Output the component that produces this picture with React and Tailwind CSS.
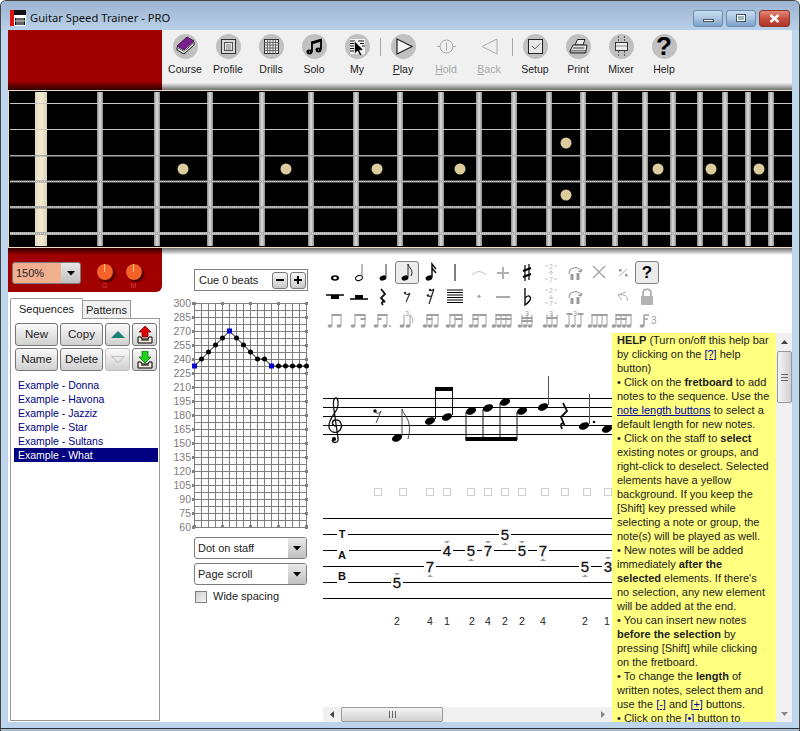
import React from "react";

const Circle = ({ children }) => (
  <div className="w-[25px] h-[25px] rounded-full bg-[#c0c0c0] flex items-center justify-center">{children}</div>
);

const I = ({ children, s = 21 }) => (
  <svg width={s} height={s} viewBox="0 0 21 21">{children}</svg>
);

const icons = {
  Course: (
    <I>
      <path d="M2 11 L12 2 L19 6 L19 9 L9 18 L2 14 Z" fill="#fff" stroke="#111" strokeWidth="1" />
      <path d="M2 10 L12 1 L19 5 L9 14 Z" fill="#7a1f8e" stroke="#4a0e5a" strokeWidth="1" />
      <path d="M3 12 L9 15.5 L18 7.5" fill="none" stroke="#555" strokeWidth="1" />
    </I>
  ),
  Profile: (
    <I>
      <rect x="3.5" y="3.5" width="14" height="14" fill="#d8d8d8" stroke="#333" />
      <rect x="6.5" y="6.5" width="8" height="8" fill="#e8e8e8" stroke="#555" />
      <path d="M8 9h5M8 11h5M8 13h5" stroke="#666" strokeWidth="0.8" />
    </I>
  ),
  Drills: (
    <I>
      <rect x="3.5" y="3.5" width="14" height="14" fill="#e4e4e4" stroke="#333" />
      <path d="M6.5 3.5v14M9 3.5v14M12 3.5v14M14.5 3.5v14M3.5 6.5h14M3.5 9h14M3.5 12h14M3.5 14.5h14" stroke="#555" strokeWidth="0.8" />
    </I>
  ),
  Solo: (
    <I>
      <path d="M7.5 5.5 L17.5 2.5 L17.5 5.5 L7.5 8.5 Z" fill="#000" />
      <path d="M8 5.5V16M17 3V13.5" stroke="#000" strokeWidth="1.8" />
      <ellipse cx="5.5" cy="16" rx="3" ry="2.4" fill="#000" />
      <ellipse cx="14.5" cy="14" rx="3" ry="2.4" fill="#000" />
      <path d="M5 16h1M14 14h1" stroke="#ccc" />
    </I>
  ),
  My: (
    <I>
      <rect x="3" y="3" width="15" height="15" fill="#f4f4f4" />
      <path d="M3 5h5M3 7.5h5M3 10h4M3 12.500h4M3 15h4M11 5h6M13 7.5h4M15 10h3" stroke="#111" strokeWidth="1.2" />
      <path d="M7.500 5 L7.500 18 L10.500 15 L13 20 L15 19 L12.500 14.500 L16.500 14 Z" fill="#000" stroke="#fff" strokeWidth="0.6" />
    </I>
  ),
  Play: (
    <I>
      <path d="M4 3 L19 10.500 L4 18 Z" fill="#f4f4f4" stroke="#222" strokeWidth="1.2" />
    </I>
  ),
  Hold: (
    <I>
      <circle cx="10.500" cy="10.500" r="6.500" fill="none" stroke="#a8a8a8" />
      <path d="M10.500 6.500v8M1 10.500h3M17 10.500h3" stroke="#a8a8a8" />
    </I>
  ),
  Back: (
    <I>
      <path d="M18 3 L3 10.500 L18 18 Z" fill="none" stroke="#a8a8a8" />
    </I>
  ),
  Setup: (
    <I>
      <rect x="3.500" y="3.500" width="14" height="14" fill="#e8e8e8" stroke="#222" />
      <path d="M7 10 L10 13 L15 7.500" fill="none" stroke="#666" strokeWidth="1" />
    </I>
  ),
  Print: (
    <I>
      <path d="M7 9 L9.500 3.500 L17 3.500 L15 9 Z" fill="#eee" stroke="#222" />
      <path d="M2 15 L5 9 L19 9 L18 15 Z" fill="#ddd" stroke="#222" />
      <path d="M2 15 L2.500 17 L17.500 17 L18 15" fill="#aaa" stroke="#222" />
      <path d="M5 12h11" stroke="#444" />
    </I>
  ),
  Mixer: (
    <I>
      <path d="M7.500 0v6M13.500 0v6M7.500 15v6M13.500 15v6" stroke="#444" strokeDasharray="2 1" strokeWidth="0.8" />
      <rect x="4.500" y="6.500" width="12" height="8" fill="#eee" stroke="#333" />
      <path d="M5 10h11" stroke="#888" />
    </I>
  ),
};

const TButton = ({ name, u, disabled }) => (
  <div className="w-[43px] flex flex-col items-center pt-[3.5px]">
    <Circle2 disabled={disabled}>
      {name === "Help" ? (
        <span className="font-['Liberation_Sans'] font-bold text-[26px] leading-[25px] text-black">?</span>
      ) : (
        icons[name]
      )}
    </Circle2>
    <div className={`text-[10.5px] leading-[14px] mt-[3px] ${disabled ? "text-[#a8a8a8]" : "text-[#222]"}`}>
      {u ? <><u>{name[0]}</u>{name.slice(1)}</> : name}
    </div>
  </div>
);

const Circle2 = ({ disabled, children }) =>
  disabled ? <div className="w-[25px] h-[25px] flex items-center justify-center">{children}</div> : <Circle>{children}</Circle>;

const Sep = () => (
  <div className="w-[3px] flex justify-center pt-[8px]">
    <div className="w-px h-[18px] bg-[#a8a8a8]" />
  </div>
);

const frets = [97, 154, 207, 259, 308, 353, 397, 438, 476, 511, 546, 580, 612, 642, 670, 697, 722, 745, 768];
const dots = [[183, 169], [286, 169], [377, 169], [460, 169], [566, 143], [566, 195], [658, 169], [711, 169], [759, 169]];

const Fretboard = () => (
  <svg width="784" height="158" viewBox="8 90 784 158" className="block">
    <defs>
      <linearGradient id="fret" x1="0" x2="1" y1="0" y2="0">
        <stop offset="0" stopColor="#8c8c8c" />
        <stop offset="0.5" stopColor="#dedede" />
        <stop offset="1" stopColor="#8c8c8c" />
      </linearGradient>
      <linearGradient id="nut" x1="0" x2="1" y1="0" y2="0">
        <stop offset="0" stopColor="#e4dcbc" />
        <stop offset="0.5" stopColor="#f2ecd6" />
        <stop offset="1" stopColor="#dcd4b4" />
      </linearGradient>
    </defs>
    <rect x="8" y="90" width="784" height="158" fill="#f0dcc0" />
    <rect x="9" y="91" width="783" height="156" fill="#000" />
    <rect x="35" y="92" width="12" height="154" fill="url(#nut)" />
    {frets.map((x) => (
      <rect key={x} x={x} y="92" width="6" height="154" fill="url(#fret)" />
    ))}
    {dots.map(([x, y]) => (
      <circle key={x + "-" + y} cx={x} cy={y} r="5.500" fill="#dccb9c" />
    ))}
    <rect x="10" y="103" width="782" height="1" fill="#c8c8c8" />
    <rect x="10" y="129" width="782" height="1" fill="#c8c8c8" />
    <rect x="10" y="155" width="782" height="1.500" fill="#a8a8a8" />
    <rect x="10" y="180.500" width="782" height="2" fill="#a0a0a0" />
    <path d="M10 181.500H792" stroke="#d0d0d0" strokeWidth="1" strokeDasharray="1 1" />
    <rect x="10" y="206" width="782" height="2.500" fill="#a0a0a0" />
    <path d="M10 207H792" stroke="#d8d8d8" strokeWidth="1" strokeDasharray="1 1" />
    <rect x="10" y="232" width="782" height="3" fill="#a8a8a8" />
    <path d="M10 233.500H792" stroke="#dcdcdc" strokeWidth="1.500" strokeDasharray="1 1" />
  </svg>
);

const Arrow = () => (
  <svg width="8" height="5" viewBox="0 0 8 5"><path d="M0 0H8L4 4.500Z" fill="#000" /></svg>
);

const Select = ({ label, w = "w-[113px]", h = "h-[22px]", seg = "w-[18px]", fill = "bg-white" }) => (
  <div className={`${w} ${h} border border-[#7c7c7c] rounded-[3px] ${fill} flex overflow-hidden`}>
    <div className="flex-1 pl-[3px] text-[11px] leading-[20px] text-[#222]">{label}</div>
    <div className={`${seg} bg-linear-to-b from-[#e8e8e8] to-[#c0c0c0] flex items-center justify-center`}>
      <Arrow />
    </div>
  </div>
);

const Knob = ({ l }) => (
  <div className="flex flex-col items-center w-[17px]">
    <div className="w-[16px] h-[16px] rounded-full bg-[#f4622a] shadow-[2px_2px_2px_#400000] flex justify-center">
      <div className="w-px h-[8px] bg-[#ffc080]" />
    </div>
    <div className="text-[7px] leading-[9px] mt-[1px] text-[#d84040]">{l}</div>
  </div>
);

const Btn = ({ children, w = "w-[43px]", disabled }) => (
  <div className={`${w} h-[23px] rounded-[3px] border ${disabled ? "border-[#c0c0c0]" : "border-[#777]"} bg-linear-to-b from-[#fafafa] to-[#d0d0d0] flex items-center justify-center text-[11.5px] text-[#222]`}>
    {children}
  </div>
);

const TrayIcon = ({ up }) => (
  <svg width="18" height="18" viewBox="0 0 18 18">
    <path d="M2 11h3l1 2h6l1-2h3v6H2Z" fill="#f0e8d8" stroke="#000" />
    <path d="M5 14h8" stroke="#000" />
    {up ? (
      <path d="M9 0 L15 6 H12 V11 H6 V6 H3 Z" fill="#e00000" stroke="#600" strokeWidth="0.7" />
    ) : (
      <path d="M6 0H12V6H15L9 12L3 6H6Z" fill="#20d020" stroke="#060" strokeWidth="0.7" />
    )}
  </svg>
);

const seqs = ["Donna", "Havona", "Jazziz", "Star", "Sultans", "What"];

const LeftPanel = () => (
  <div className="w-[154px] h-[474px] bg-white flex flex-col shrink-0">
    <div className="h-[44px] bg-[#a00000] rounded-br-[6px] relative">
      <div className="h-[7px] bg-linear-to-b from-[#300000] to-[#a00000]" />
      <div className="flex items-start pl-[4px] pt-[7px]">
        <Select label={<span>150%</span>} w="w-[69px]" h="h-[22px]" seg="w-[19px]" fill="bg-[#f0b090]" />
        <div className="flex ml-[15px] gap-[12px] pt-[2px]">
          <Knob l="G" />
          <Knob l="M" />
        </div>
      </div>
    </div>
    <div className="pl-[2px] pt-[6px] flex-1 flex flex-col">
      <div className="flex items-end h-[21px] relative z-10">
        <div className="w-[73px] h-[21px] bg-white border border-b-0 border-[#999] text-[11px] leading-[21px] text-center text-[#222] rounded-t-[2px]">Sequences</div>
        <div className="w-[48px] h-[19px] bg-[#f0f0f0] border border-l-0 border-[#999] text-[11px] leading-[19px] text-center text-[#222]">Patterns</div>
      </div>
      <div className="w-[150px] h-[403px] -mt-px border border-[#999] bg-white pl-[4px] pt-[4px]">
        <div className="flex gap-[2px]">
          <Btn>New</Btn>
          <Btn>Copy</Btn>
          <Btn w="w-[25px]">
            <svg width="14" height="7" viewBox="0 0 14 7"><path d="M0 7L7 0L14 7Z" fill="#1c8070" /></svg>
          </Btn>
          <Btn w="w-[25px]"><TrayIcon up /></Btn>
        </div>
        <div className="flex gap-[2px] mt-[2px]">
          <Btn>Name</Btn>
          <Btn>Delete</Btn>
          <Btn w="w-[25px]" disabled>
            <svg width="14" height="7" viewBox="0 0 14 7"><path d="M0.500 0.500H13.500L7 6.500Z" fill="none" stroke="#c0c0c0" /></svg>
          </Btn>
          <Btn w="w-[25px]"><TrayIcon /></Btn>
        </div>
        <div className="mt-[7px] -ml-px w-[144px]">
          {seqs.map((s) => (
            <div key={s} className={`h-[14px] text-[10.5px] leading-[14px] pl-[4px] whitespace-nowrap ${s === "What" ? "bg-[#000080] text-white" : "text-[#000080]"}`}>
              Example - {s}
            </div>
          ))}
        </div>
      </div>
    </div>
  </div>
);

const CHX = Array.from({ length: 17 }, (_, i) => 194 + i * 7);
const CHY = Array.from({ length: 33 }, (_, i) => 303 + i * 7);
const pts = [366, 359, 352, 345, 338, 331, 338, 345, 352, 359, 359, 366, 366, 366, 366, 366, 366];
const blue = [0, 5, 11];

const Chart = () => (
  <svg width="150" height="238" viewBox="170 297 150 238" className="block">
    {CHX.map((x) => <line key={x} x1={x + 0.5} x2={x + 0.5} y1="303" y2="527.500" stroke="#808080" />)}
    {CHY.map((y) => <line key={y} y1={y + 0.5} y2={y + 0.5} x1="194" x2="306.500" stroke="#808080" />)}
    {[222, 250, 278, 306, 194].map((x) => (
      <React.Fragment key={x}>
        <rect x={x - 1} y="302" width="3" height="3" fill="#808080" />
        <rect x={x - 1} y="525" width="3" height="3" fill="#808080" />
      </React.Fragment>
    ))}
    {Array.from({ length: 17 }, (_, i) => (
      <React.Fragment key={i}>
        <rect x="192" y={302 + i * 14} width="3" height="3" fill="#808080" />
        <rect x="305" y={302 + i * 14} width="3" height="3" fill="#808080" />
        <text x="191" y={307 + i * 14} textAnchor="end" fontSize="10.500" fill="#7c7c7c" fontFamily="Liberation Sans">{300 - i * 15}</text>
      </React.Fragment>
    ))}
    <polyline points={pts.map((y, i) => `${194.5 + i * 7},${y}`).join(" ")} fill="none" stroke="#000" />
    {pts.map((y, i) =>
      blue.includes(i) ? (
        <rect key={i} x={192 + i * 7} y={y - 2.500} width="5" height="5" fill="#0000d0" />
      ) : (
        <circle key={i} cx={194.5 + i * 7} cy={y} r="2.500" fill="#000" />
      )
    )}
  </svg>
);

const MidPanel = () => (
  <div className="w-[161px] shrink-0 flex flex-col">
    <div className="ml-[32px] mt-[14px] w-[114px] h-[22px] border border-[#808080] flex items-center pl-[4px] pr-[1px] text-[11px] text-[#222]">
      <div className="flex-1 whitespace-nowrap">Cue 0 beats</div>
      <div className="w-[16px] h-[17px] rounded-[3px] border border-[#777] bg-linear-to-b from-[#f8f8f8] to-[#c8c8c8] flex items-center justify-center">
        <div className="w-[8px] h-[2px] bg-black" />
      </div>
      <div className="ml-[2px] w-[16px] h-[17px] rounded-[3px] border border-[#777] bg-linear-to-b from-[#f8f8f8] to-[#c8c8c8] flex items-center justify-center">
        <svg width="10" height="10" viewBox="0 0 10 10"><path d="M5 1v8M1 5h8" stroke="#000" strokeWidth="2" /></svg>
      </div>
    </div>
    <div className="ml-[8px] mt-[6px]"><Chart /></div>
    <div className="ml-[32px] mt-[2px]"><Select label="Dot on staff" h="h-[22px]" /></div>
    <div className="ml-[32px] mt-[4px]"><Select label="Page scroll" h="h-[22px]" /></div>
    <div className="ml-[33px] mt-[5px] flex items-center">
      <div className="w-[12px] h-[12px] border border-[#808080] bg-linear-to-br from-[#d0d0d0] to-[#f4f4f4]" />
      <div className="ml-[6px] text-[11px] leading-[13px] text-[#222]">Wide spacing</div>
    </div>
  </div>
);

const N = ({ children, box }) => (
  <div className={`w-[24px] h-[23px] shrink-0 flex items-center justify-center ${box ? "border border-[#808080] rounded-[3px] bg-[#ececec]" : ""}`}>
    {children}
  </div>
);
const S = ({ children }) => <svg width="22" height="21" viewBox="0 0 22 21">{children}</svg>;
const H = ({ x = 11, y = 16, open, f = "#000" }) => (
  <ellipse cx={x} cy={y} rx="3.500" ry="2.500" transform={`rotate(-22 ${x} ${y})`} fill={open ? "#fff" : f} stroke={f} strokeWidth={open ? 1 : 0} />
);

const row1 = [
  <S><ellipse cx="11" cy="16" rx="4" ry="2.800" fill="#000" /><ellipse cx="11" cy="16" rx="1.800" ry="1.300" fill="#fff" /></S>,
  <S><H open /><path d="M14 15V2" stroke="#777" /></S>,
  <S><H /><path d="M14 15V2" stroke="#333" /></S>,
  <S><H x="9" /><path d="M12 15V2C13 6 18 8 15 14" stroke="#222" fill="none" /></S>,
  <S><H x="9" /><path d="M12 15V2L16 7M12 6L16 11" stroke="#111" strokeWidth="1.500" fill="none" /></S>,
  <S><path d="M11 2V19" stroke="#000" /></S>,
  <S><path d="M4 13Q11 6 18 13" stroke="#c0c0c0" fill="none" /></S>,
  <S><path d="M11 5V17M5 11H17" stroke="#b0b0b0" strokeWidth="2" /></S>,
  <S><path d="M9 3V19M13 2V18" stroke="#000" strokeWidth="1.200" /><path d="M7 9L15 6M7 15L15 12" stroke="#000" strokeWidth="2.200" /></S>,
  <S><text x="11" y="7" textAnchor="middle" fontSize="7" fill="#b4b4b4">2</text><text x="11" y="20" textAnchor="middle" fontSize="7" fill="#b4b4b4">7</text><path d="M5 4h3M14 4h3M5 17h3M14 17h3M11 13V9M9 11l2-2 2 2" stroke="#b4b4b4" fill="none" strokeWidth="0.800" /></S>,
  <S><path d="M5 12C5 4 16 4 17 10M17 10l-3 -1M17 10l1 -3" stroke="#999" fill="none" strokeWidth="1.200" /><path d="M8 12v6M14 11v7" stroke="#999" strokeWidth="3" /></S>,
  <S><path d="M5 4L17 16M17 4L5 16" stroke="#aaa" strokeWidth="1.500" /></S>,
  <S><path d="M7 14L15 7" stroke="#b0b0b0" strokeWidth="1" /><rect x="7" y="7" width="2.500" height="2.500" fill="#999" /><rect x="13" y="12" width="2.500" height="2.500" fill="#999" /></S>,
];
const row2 = [
  <S><path d="M2 9H20" stroke="#000" strokeWidth="1.500" /><rect x="7" y="9" width="8" height="4" fill="#000" /></S>,
  <S><path d="M2 13H20" stroke="#000" strokeWidth="1.500" /><rect x="7" y="9" width="8" height="4" fill="#000" /></S>,
  <S><path d="M9 3L13 8L9 12L13 16C10 15 9 17 11 19" stroke="#111" strokeWidth="1.800" fill="none" /></S>,
  <S><path d="M14 7L10 16M14 7C12 9 10 9 9 7" stroke="#333" strokeWidth="1.200" fill="none" /><circle cx="9" cy="7" r="1.200" fill="#333" /></S>,
  <S><path d="M14 3L9 18M14 3C12 5 11 5 10 4M12 9C11 11 9 11 8 9" stroke="#222" strokeWidth="1.200" fill="none" /><circle cx="10" cy="4" r="1.200" fill="#222" /><circle cx="8" cy="9.500" r="1.200" fill="#222" /></S>,
  <S><path d="M3 4H19M3 6.500H19M3 9H19M3 11.500H19M3 14H19M3 16.500H19" stroke="#000" /></S>,
  <S><rect x="9.500" y="9" width="3" height="3" fill="#aaa" transform="rotate(45 11 10.500)" /></S>,
  <S><path d="M4 11H18" stroke="#aaa" strokeWidth="2" /></S>,
  <S><path d="M9 2V19C12 17 16 13 14 11C13 9 11 10 9 12" stroke="#000" strokeWidth="1.300" fill="none" /></S>,
  <S><text x="11" y="7" textAnchor="middle" fontSize="7" fill="#b4b4b4">2</text><text x="11" y="20" textAnchor="middle" fontSize="7" fill="#b4b4b4">7</text><path d="M5 4h3M14 4h3M5 17h3M14 17h3M11 9V13M9 11l2 2 2-2" stroke="#b4b4b4" fill="none" strokeWidth="0.800" /></S>,
  <S><path d="M5 12C5 4 16 4 17 10M17 10l-3 -1M17 10l1 -3" stroke="#999" fill="none" strokeWidth="1.200" /><path d="M8 12v6M14 11v7" stroke="#999" strokeWidth="3" /></S>,
  <S />,
  <S><path d="M6 9L14 6M6 9L10 14M6 9C12 8 17 10 15 15" stroke="#aaa" fill="none" /></S>,
  <S><path d="M7 10V7C7 2 15 2 15 7V10" stroke="#a0a0a0" strokeWidth="1.500" fill="none" /><rect x="5" y="10" width="12" height="9" fill="#b4b4b4" /></S>,
];

const G = "#a0a0a0";
const Group = ({ xs, beams, tri, dot, flag }) => (
  <S>
    {xs.map((x) => (
      <React.Fragment key={x}>
        <path d={`M${x} 4.500V16`} stroke={G} />
        <ellipse cx={x - 2} cy="16" rx="2.400" ry="1.800" fill={G} />
      </React.Fragment>
    ))}
    {beams.map(([a, b, y = 4], i) => <rect key={i} x={a - 0.500} y={y} width={b - a + 1} height="2" fill={G} />)}
    {tri && <text x="11" y="6" textAnchor="middle" fontSize="7" fill={G} fontFamily="Liberation Sans">3</text>}
    {dot && <circle cx={dot} cy="16" r="1" fill={G} />}
    {flag && <path d={`M${flag} 5C${flag + 2} 8 ${flag + 4} 9 ${flag + 2} 13`} stroke={G} fill="none" />}
  </S>
);
const row3 = [
  <Group xs={[8, 17]} beams={[[8, 17]]} />,
  <Group xs={[7, 17]} beams={[[7, 17], [13, 17, 8]]} />,
  <Group xs={[6, 15]} beams={[[6, 15], [6, 9, 8]]} dot={18} />,
  <Group xs={[8, 14]} beams={[]} flag={14} tri />,
  <Group xs={[7, 12, 18]} beams={[[7, 18], [7, 12, 8]]} />,
  <Group xs={[6, 11, 18]} beams={[[6, 18], [11, 18, 8]]} />,
  <Group xs={[5, 10, 18]} beams={[[5, 18], [5, 10, 8]]} />,
  <Group xs={[4, 9, 14, 19]} beams={[[4, 19], [4, 19, 8]]} />,
  <Group xs={[6, 11, 16]} beams={[[6, 16, 7], [6, 16, 10]]} tri />,
  <Group xs={[7, 12, 17]} beams={[[7, 17, 7]]} tri />,
  <Group xs={[5, 11, 17]} beams={[[3, 8, 3], [14, 19, 3]]} tri />,
  <Group xs={[4, 9, 14, 19]} beams={[[4, 19]]} />,
  <Group xs={[4, 9, 14, 19]} beams={[[4, 19], [4, 14, 8]]} />,
  <S><path d="M8 5V16M8 5H13M8 9H12" stroke={G} strokeWidth="1.500" fill="none" /><ellipse cx="6" cy="16" rx="2.400" ry="1.800" fill={G} /><text x="15" y="14" fontSize="10" fill={G} fontFamily="Liberation Sans">3</text></S>,
];

const NoteBar = () => (
  <div className="pt-[6px] pl-[0px]">
    <div className="flex">
      {row1.map((c, i) => <N key={i} box={i === 3}>{c}</N>)}
      <N box><span className="font-bold text-[17px] leading-none text-black">?</span></N>
    </div>
    <div className="flex mt-[1px]">{row2.map((c, i) => <N key={i}>{c}</N>)}</div>
    <div className="flex mt-[1px]">{row3.map((c, i) => <N key={i}>{c}</N>)}</div>
  </div>
);

const squares = [378, 403, 430, 447, 471, 488, 505, 522, 545, 565, 587, 608];
const tabNums = [
  [397, 582, "5", "d"], [430, 566, "7", "u"], [447, 550, "4", "d"], [471, 550, "5", "u"], [488, 550, "7", "d"],
  [505, 534, "5", "u"], [522, 550, "5", "d"], [543, 550, "7", "u"], [585, 566, "5", "u"], [608, 566, "3", "d"],
];
const fing = [[397, 2], [430, 4], [447, 1], [472, 2], [488, 4], [505, 2], [522, 2], [543, 4], [585, 2], [607, 1]];

const HD = ({ x, y }) => <ellipse cx={x} cy={y} rx="5.300" ry="3.400" transform={`rotate(-22 ${x} ${y})`} fill="#000" />;

const Score = () => (
  <svg width="289" height="374" viewBox="323 333 289 374" className="block" fontFamily="Liberation Sans">
    {[398, 407, 416, 425, 434].map((y) => <rect key={y} x="323" y={y} width="289" height="1" fill="#000" />)}
    <path d="M336 426C332 426 331 421 335 420C341 419 343 426 340 430C337 434 330 433 329 427C328 420 334 415 337 409C339 404 338 398 336 398C333 398 333 404 334 410L338 438C339 443 333 444 332 440" fill="none" stroke="#111" strokeWidth="1.300" />
    <circle cx="334" cy="439" r="2" fill="#000" />
    <path d="M381 411L376 423M381 411C379 414 376 414 375 411" stroke="#444" fill="none" />
    <circle cx="375" cy="411" r="1.800" fill="#111" />
    <HD x="397" y="438" />
    <path d="M402 436V409C404 416 413 420 408 439" stroke="#444" fill="none" />
    <HD x="430" y="421" /><HD x="447" y="417" />
    <path d="M435.500 419V388M452.500 415V388" stroke="#111" />
    <rect x="435" y="387" width="18" height="4" fill="#000" />
    <HD x="471" y="411" /><HD x="488" y="408" /><HD x="505" y="402" /><HD x="522" y="411" />
    <path d="M466 412V440M483 409V440M500 403V440M517 412V440" stroke="#111" />
    <rect x="465.500" y="437" width="51.500" height="4" fill="#000" />
    <HD x="543" y="407" />
    <path d="M548.500 405V376" stroke="#555" />
    <path d="M563 403L567 411L561 417L564 424C561 422 560 425 562 429" fill="none" stroke="#111" strokeWidth="1.800" />
    <HD x="584" y="426" />
    <path d="M589.500 424V394" stroke="#555" />
    <circle cx="594" cy="422" r="1.300" fill="#000" />
    <HD x="607" y="429" />
    {squares.map((x) => <rect key={x} x={x - 3.500} y="488.500" width="7" height="7" fill="#fff" stroke="#d0d0d0" />)}
    {[518, 534, 550, 566, 582, 598].map((y) => <rect key={y} x="323" y={y} width="289" height="1" fill="#000" />)}
    <rect x="337" y="530" width="11" height="8" fill="#fff" />
    <rect x="337" y="546" width="12" height="8" fill="#fff" />
    <rect x="337" y="578" width="11" height="8" fill="#fff" />
    <text x="342" y="538" textAnchor="middle" fontSize="11" fontWeight="bold" fill="#111">T</text>
    <text x="342" y="559" textAnchor="middle" fontSize="11" fontWeight="bold" fill="#111">A</text>
    <text x="342" y="580" textAnchor="middle" fontSize="11" fontWeight="bold" fill="#111">B</text>
    {tabNums.map(([x, y, t, d]) => (
      <React.Fragment key={x}>
        <rect x={x - 6} y={y - 7} width="12" height="15" fill="#fff" />
        <text x={x} y={y + 6} textAnchor="middle" fontSize="15" stroke="#111" strokeWidth="0.300" fill="#111">{t}</text>
        {d === "d" ? (
          <path d={`M${x - 3} ${y - 9}H${x + 3}L${x} ${y - 6.500}Z`} fill="#a0a0a0" />
        ) : (
          <path d={`M${x - 3} ${y + 11}H${x + 3}L${x} ${y + 8.500}Z`} fill="#a0a0a0" />
        )}
      </React.Fragment>
    ))}
    {fing.map(([x, n]) => <text key={x} x={x} y="625" textAnchor="middle" fontSize="10.500" fill="#222">{n}</text>)}
  </svg>
);

const L = ({ children }) => <span className="underline text-[#0000a0]">{children}</span>;
const helpLines = [
  <><b>HELP</b> (Turn on/off this help bar</>,
  <>by clicking on the <L>[?]</L> help</>,
  <>button)</>,
  <>• Click on the <b>fretboard</b> to add</>,
  <>notes to the sequence. Use the</>,
  <><L>note length buttons</L> to select a</>,
  <>default length for new notes.</>,
  <>• Click on the staff to <b>select</b></>,
  <>existing notes or groups, and</>,
  <>right-click to deselect. Selected</>,
  <>elements have a yellow</>,
  <>background. If you keep the</>,
  <>[Shift] key pressed while</>,
  <>selecting a note or group, the</>,
  <>note(s) will be played as well.</>,
  <>• New notes will be added</>,
  <>immediately <b>after the</b></>,
  <><b>selected</b> elements. If there's</>,
  <>no selection, any new element</>,
  <>will be added at the end.</>,
  <>• You can insert new notes</>,
  <><b>before the selection</b> by</>,
  <>pressing [Shift] while clicking</>,
  <>on the fretboard.</>,
  <>• To change the <b>length</b> of</>,
  <>written notes, select them and</>,
  <>use the <L>[-]</L> and <L>[+]</L> buttons.</>,
  <>• Click on the <L>[•]</L> button to</>,
];

const Help = () => (
  <div className="w-[164px] h-[389px] bg-[#ffff80] overflow-hidden pl-[5px] text-[11px] leading-[14px] text-[#222] whitespace-nowrap">
    {helpLines.map((l, i) => <div key={i} className="h-[14px]">{l}</div>)}
  </div>
);

const VScroll = () => (
  <div className="w-[16px] h-[389px] bg-[#f0f0f0] flex flex-col items-center">
    <div className="h-[18px] flex items-center justify-center">
      <svg width="7" height="4" viewBox="0 0 7 4"><path d="M0 4L3.500 0L7 4Z" fill="#444" /></svg>
    </div>
    <div className="w-[15px] h-[52px] rounded-[2px] border border-[#999] bg-linear-to-r from-[#f4f4f4] to-[#d0d0d0] flex items-center justify-center">
      <div className="w-[7px] h-[7px] border-y border-[#666] flex items-center"><div className="w-full h-px bg-[#666]" /></div>
    </div>
    <div className="flex-1" />
    <div className="h-[16px] flex items-center justify-center">
      <svg width="7" height="4" viewBox="0 0 7 4"><path d="M0 0L3.500 4L7 0Z" fill="#888" /></svg>
    </div>
  </div>
);

const HScroll = () => (
  <div className="h-[15px] bg-[#f0f0f0] flex items-center">
    <div className="w-[18px] flex justify-center">
      <svg width="4" height="7" viewBox="0 0 4 7"><path d="M4 0L0 3.500L4 7Z" fill="#444" /></svg>
    </div>
    <div className="w-[102px] h-[15px] rounded-[2px] border border-[#999] bg-linear-to-b from-[#f4f4f4] to-[#d0d0d0] flex items-center justify-center">
      <div className="w-[7px] h-[7px] border-x border-[#666] flex justify-center"><div className="h-full w-px bg-[#666]" /></div>
    </div>
    <div className="flex-1" />
    <div className="w-[18px] flex justify-center">
      <svg width="4" height="7" viewBox="0 0 4 7"><path d="M0 0L4 3.500L0 7Z" fill="#888" /></svg>
    </div>
  </div>
);

const WinBtn = ({ w, red, children }) => (
  <div className={`${w} h-[17px] rounded-[3px] border ${red ? "border-[#8c3a30] bg-linear-to-b from-[#e08878] via-[#c85040] to-[#b03428]" : "border-[#6c8cb0] bg-linear-to-b from-[#c8dcf0] via-[#a8c4e0] to-[#7ca0c8]"} flex items-center justify-center`}>
    {children}
  </div>
);

export default function App() {
  return (
    <div className="w-[800px] h-[731px] overflow-hidden bg-[#bcd4ec] rounded-t-[6px] border-x border-t border-[#444] flex flex-col font-['Liberation_Sans',sans-serif]">
      <div className="h-[29px] shrink-0 bg-linear-to-b from-[#9cb4d0] to-[#b8d0e8] flex items-center pl-[9px] pr-[9px] pt-[5px]">
        <svg width="16" height="16" viewBox="0 0 16 16" className="shrink-0">
          <rect width="16" height="16" fill="#fff" />
          <rect width="16" height="5" fill="#111" />
          <rect y="0" width="4" height="16" fill="#e01010" />
          <rect y="0" width="4" height="2" fill="#e01010" />
          <rect x="5" y="8" width="10" height="7" fill="#111" />
          <path d="M7 8v7M9 8v7M11 8v7M13 8v7M5 11h10" stroke="#fff" strokeWidth="0.700" />
        </svg>
        <div className="ml-[4px] text-[11.2px] text-[#111] font-['Noto_Sans'] whitespace-nowrap">Guitar Speed Trainer - PRO</div>
        <div className="flex-1" />
        <div className="flex gap-[3px]">
          <WinBtn w="w-[30px]"><div className="w-[11px] h-[3px] mt-[4px] bg-white border border-[#456]" /></WinBtn>
          <WinBtn w="w-[30px]"><div className="w-[10px] h-[8px] bg-white border border-[#456] flex items-center justify-center"><div className="w-[6px] h-[4px] bg-[#9bb]" /></div></WinBtn>
          <WinBtn w="w-[31px]" red>
            <svg width="11" height="9" viewBox="0 0 11 9"><path d="M1.500 1L9.500 8M9.500 1L1.500 8" stroke="#fff" strokeWidth="2.400" /></svg>
          </WinBtn>
        </div>
      </div>
      <div className="mx-[7px] h-[692px] shrink-0 bg-white flex flex-col">
        <div className="h-[60px] flex shrink-0">
          <div className="w-[154px] flex flex-col">
            <div className="flex-1 bg-[#a00000]" />
            <div className="h-[9px] bg-linear-to-b from-[#a00000] to-[#300000]" />
          </div>
          <div className="flex-1 flex flex-col">
            <div className="h-[53px] bg-[#f0f0f0] flex pl-[1.500px]">
              <TButton name="Course" />
              <TButton name="Profile" />
              <TButton name="Drills" />
              <TButton name="Solo" />
              <TButton name="My" />
              <Sep />
              <TButton name="Play" u />
              <TButton name="Hold" u disabled />
              <TButton name="Back" u disabled />
              <Sep />
              <TButton name="Setup" />
              <TButton name="Print" />
              <TButton name="Mixer" />
              <TButton name="Help" />
            </div>
            <div className="h-[7px] bg-linear-to-b from-[#f0f0f0] to-[#707070]" />
          </div>
        </div>
        <Fretboard />
        <div className="flex h-[474px]">
          <LeftPanel />
          <div className="flex-1 flex flex-col">
            <div className="h-[7px] shrink-0 bg-linear-to-b from-[#707070] to-white" />
            <div className="flex flex-1">
              <MidPanel />
              <div className="flex-1 flex flex-col">
                <div className="h-[78px] shrink-0"><NoteBar /></div>
                <div className="flex">
                  <div className="w-[289px] flex flex-col">
                    <Score />
                    <HScroll />
                  </div>
                  <Help />
                  <VScroll />
                </div>
              </div>
            </div>
          </div>
        </div>
      </div>
      <div className="h-[6px] shrink-0" />
      <div className="h-px shrink-0 bg-[#333]" />
      <div className="flex-1 bg-[#a8bcd0]" />
    </div>
  );
}
